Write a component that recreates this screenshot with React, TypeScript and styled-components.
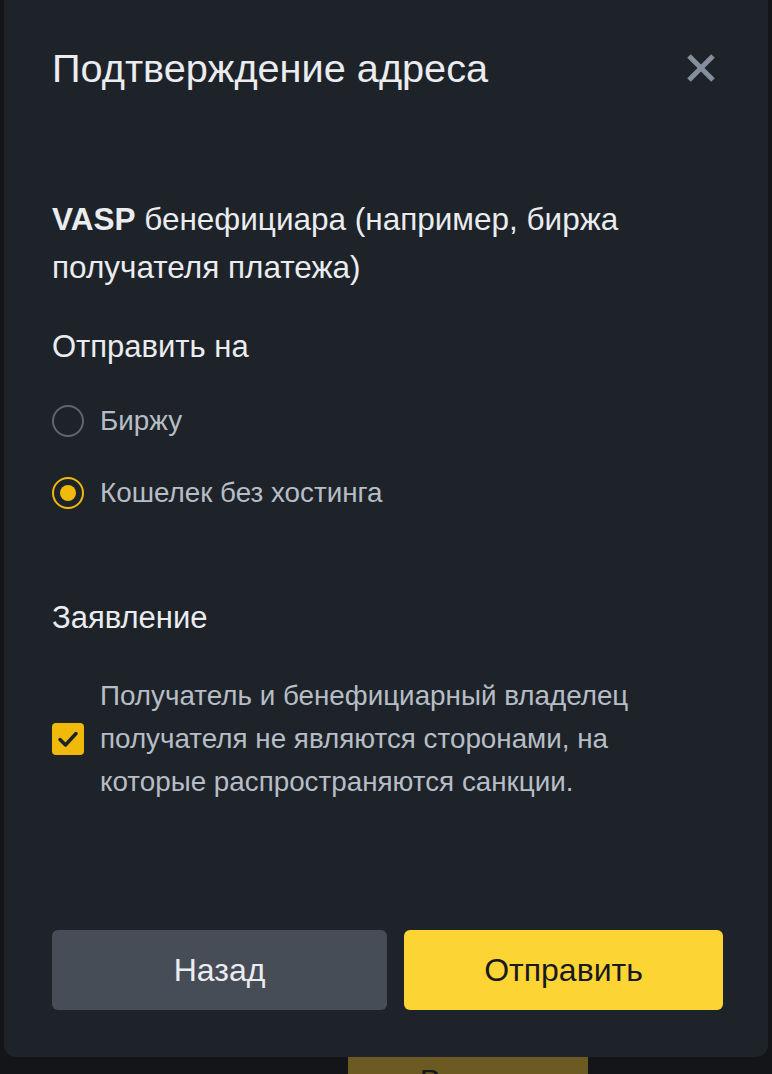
import { useState } from "react";
import styled, { createGlobalStyle } from "styled-components";

const GlobalStyle = createGlobalStyle`
  html, body {
    margin: 0;
    padding: 0;
    background: #131518;
  }
  body {
    font-family: "Liberation Sans", Arial, sans-serif;
  }
`;

const Page = styled.div`
  width: 772px;
  height: 1074px;
  overflow: hidden;
  display: flex;
  flex-direction: column;
  padding-left: 4px;
  box-sizing: border-box;
`;

const Modal = styled.div`
  box-sizing: border-box;
  width: 764px;
  height: 1057px;
  flex-shrink: 0;
  background: #1e2329;
  border-radius: 0 0 12px 12px;
  padding: 45px 45px 0 48px;
  display: flex;
  flex-direction: column;
`;

const Header = styled.div`
  display: flex;
  align-items: center;
  justify-content: space-between;
  padding-right: 6px;
`;

const Title = styled.h1`
  margin: 0;
  font-size: 39.7px;
  line-height: 46px;
  font-weight: 400;
  color: #eaecef;
`;

const CloseButton = styled.button`
  border: 0;
  background: none;
  padding: 0;
  width: 32px;
  height: 32px;
  display: flex;
  align-items: center;
  justify-content: center;
  cursor: pointer;
`;

const Heading = styled.p`
  margin: 104px 0 0;
  font-size: 31.5px;
  line-height: 48px;
  color: #eaecef;

  b {
    font-weight: 700;
  }
`;

const SectionTitle = styled.p<{ $top: number }>`
  margin: ${({ $top }) => $top}px 0 0;
  font-size: 31px;
  line-height: 40px;
  color: #eaecef;
`;

const RadioList = styled.div`
  margin-top: 34px;
  display: flex;
  flex-direction: column;
  gap: 32px;
`;

const RadioRow = styled.label`
  display: flex;
  align-items: center;
  gap: 16px;
  height: 40px;
  cursor: pointer;
`;

const RadioMark = styled.span<{ $checked: boolean }>`
  box-sizing: border-box;
  width: 32px;
  height: 32px;
  border-radius: 50%;
  border: 2px solid ${({ $checked }) => ($checked ? "#f0b90b" : "#5e6673")};
  display: flex;
  align-items: center;
  justify-content: center;

  &::after {
    content: "";
    width: 16px;
    height: 16px;
    border-radius: 50%;
    background: #f0b90b;
    display: ${({ $checked }) => ($checked ? "block" : "none")};
  }
`;

const OptionText = styled.span`
  font-size: 27.8px;
  color: #b7bdc6;
`;

const CheckRow = styled.label`
  margin-top: 36px;
  display: flex;
  align-items: center;
  gap: 16px;
  cursor: pointer;
`;

const CheckBox = styled.span<{ $checked: boolean }>`
  width: 32px;
  height: 32px;
  flex-shrink: 0;
  border-radius: 4px;
  background: ${({ $checked }) => ($checked ? "#f0b90b" : "transparent")};
  border: ${({ $checked }) => ($checked ? "0" : "2px solid #5e6673")};
  box-sizing: border-box;
  display: flex;
  align-items: center;
  justify-content: center;
`;

const CheckText = styled.span`
  max-width: 545px;
  font-size: 27.8px;
  line-height: 43px;
  color: #b7bdc6;
`;

const Actions = styled.div`
  margin-top: auto;
  margin-bottom: 47px;
  display: flex;
  gap: 17px;
`;

const Button = styled.button<{ $primary?: boolean }>`
  height: 80px;
  border: 0;
  border-radius: 6px;
  font-family: "Liberation Sans", Arial, sans-serif;
  font-size: 32px;
  cursor: pointer;
  flex: ${({ $primary }) => ($primary ? "0 0 319px" : "0 0 335px")};
  background: ${({ $primary }) => ($primary ? "#fcd535" : "#474d57")};
  color: ${({ $primary }) => ($primary ? "#181a20" : "#eaecef")};
`;

const Backdrop = styled.div`
  display: flex;
  padding-left: 344px;
`;

const DimButton = styled.div`
  width: 240px;
  height: 60px;
  background: #6b5a22;
  color: #16181b;
  font-size: 32px;
  text-align: center;
  padding-top: 6px;
  box-sizing: border-box;
`;

const options = ["Биржу", "Кошелек без хостинга"];

export default function App() {
  const [target, setTarget] = useState(1);
  const [agreed, setAgreed] = useState(true);

  return (
    <>
      <GlobalStyle />
      <Page>
        <Modal>
          <Header>
            <Title>Подтверждение адреса</Title>
            <CloseButton aria-label="Закрыть">
              <svg width="30" height="30" viewBox="0 0 30 30">
                <path d="M3 3 L27 27 M27 3 L3 27" stroke="#848e9c" strokeWidth="5" />
              </svg>
            </CloseButton>
          </Header>

          <Heading>
            <b>VASP</b> бенефициара (например, биржа получателя платежа)
          </Heading>

          <SectionTitle $top={36}>Отправить на</SectionTitle>
          <RadioList>
            {options.map((label, i) => (
              <RadioRow key={label} onClick={() => setTarget(i)}>
                <RadioMark $checked={target === i} />
                <OptionText>{label}</OptionText>
              </RadioRow>
            ))}
          </RadioList>

          <SectionTitle $top={85}>Заявление</SectionTitle>
          <CheckRow onClick={() => setAgreed(!agreed)}>
            <CheckBox $checked={agreed}>
              {agreed && (
                <svg width="22" height="22" viewBox="0 0 22 22">
                  <path
                    d="M3 11.5 L8.5 17 L19 5.5"
                    fill="none"
                    stroke="#1e2329"
                    strokeWidth="3.5"
                    strokeLinecap="round"
                    strokeLinejoin="round"
                  />
                </svg>
              )}
            </CheckBox>
            <CheckText>
              Получатель и бенефициарный владелец получателя не являются сторонами, на которые
              распространяются санкции.
            </CheckText>
          </CheckRow>

          <Actions>
            <Button>Назад</Button>
            <Button $primary>Отправить</Button>
          </Actions>
        </Modal>
        <Backdrop>
          <DimButton>Вывод</DimButton>
        </Backdrop>
      </Page>
    </>
  );
}
